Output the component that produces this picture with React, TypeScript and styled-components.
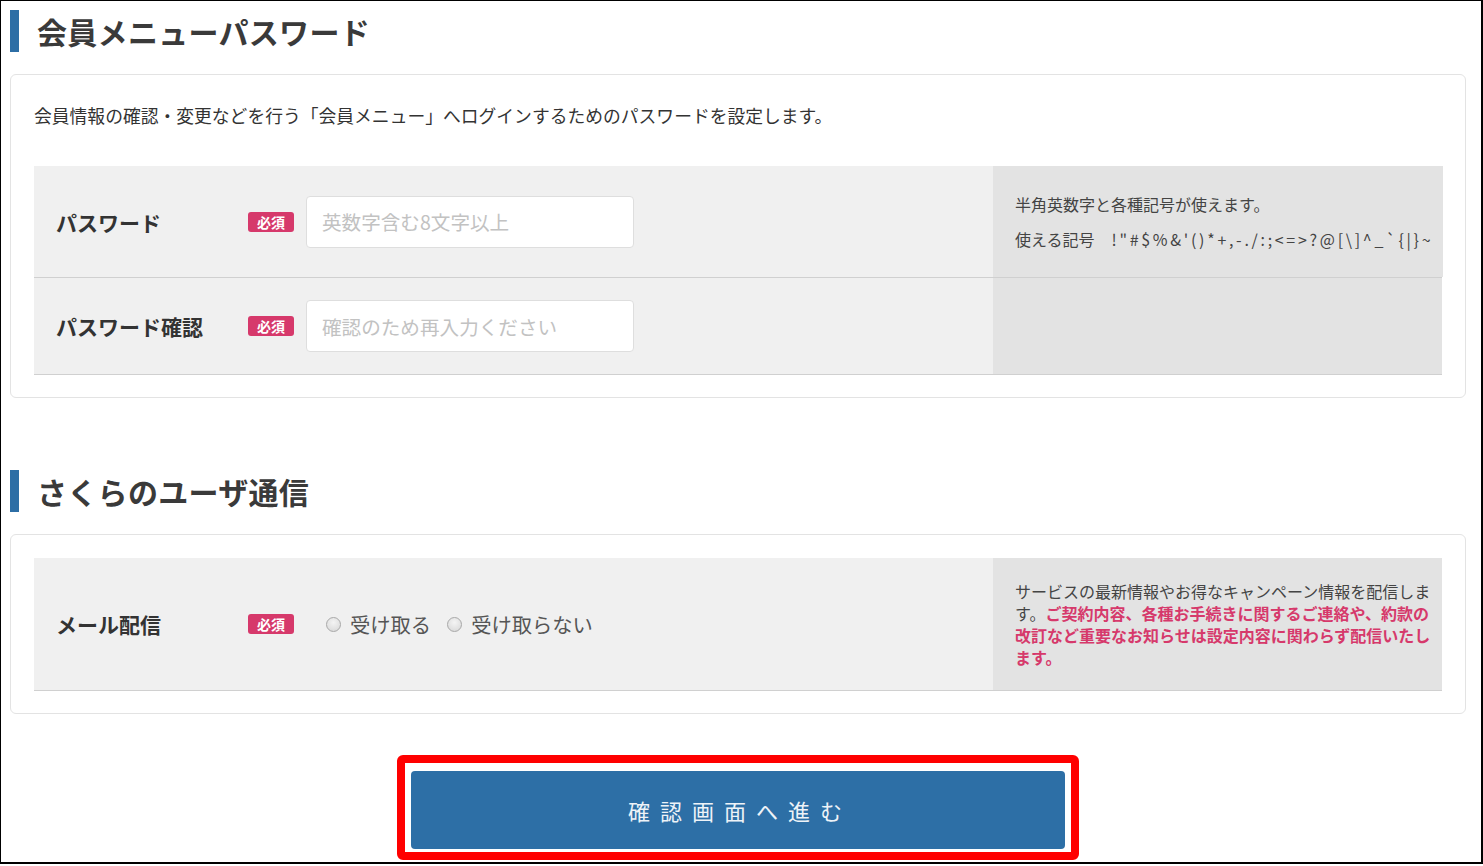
import React from "react";
import styled, { createGlobalStyle } from "styled-components";

const Global = createGlobalStyle`
  html, body { margin: 0; padding: 0; background: #fff; }
  body { font-family: "Noto Sans CJK JP", "Noto Sans", sans-serif; color: #333; }
  * { box-sizing: border-box; }
`;

const Frame = styled.div`
  width: 1483px;
  height: 864px;
  border-left: 1px solid #000;
  border-top: 1px solid #000;
  border-right: 2px solid #000;
  border-bottom: 2px solid #000;
  padding: 9px 15px 0 9px;
  display: flex;
  flex-direction: column;
  overflow: hidden;
`;

const Heading = styled.h2<{ $top?: number }>`
  margin: ${(p) => p.$top ?? 0}px 0 0 0;
  height: 42px;
  display: flex;
  align-items: center;
  gap: 18px;
  font-size: 30px;
  font-weight: 700;
  color: #3a3a3a;
  line-height: 1;
  letter-spacing: 0.3px;
  &::before {
    content: "";
    width: 9px;
    height: 42px;
    background: #2d6ea5;
  }
`;

const Card = styled.section<{ $padTop: number }>`
  margin-top: 22px;
  border: 1px solid #e3e3e3;
  border-radius: 6px;
  padding: ${(p) => p.$padTop}px 23px 22px 23px;
`;

const Intro = styled.p`
  margin: 0 0 39px 0;
  font-size: 17.8px;
  line-height: 24px;
  color: #333;
`;

const Row = styled.div`
  display: grid;
  grid-template-columns: 959px 1fr;
  border-bottom: 1px solid #d0d0d0;
`;

const LeftCell = styled.div`
  background: #f0f0f0;
  display: flex;
  align-items: center;
  padding: 22px 0;
`;

const Label = styled.div`
  width: 214px;
  padding-left: 22px;
  font-size: 21px;
  font-weight: 700;
  color: #333;
`;

const Badge = styled.span`
  width: 46px;
  height: 20px;
  border-radius: 3px;
  background: #d6396b;
  color: #fff;
  font-size: 14px;
  font-weight: 700;
  display: inline-flex;
  align-items: center;
  justify-content: center;
  margin-right: 12px;
  flex-shrink: 0;
`;

const TextInput = styled.input`
  width: 328px;
  height: 52px;
  border: 1px solid #dedede;
  border-radius: 4px;
  background: #fff;
  padding: 0 15px;
  font-family: inherit;
  font-size: 19.6px;
  color: #333;
  outline: none;
  &::placeholder { color: #c2c2c2; }
`;

const NoteCell = styled.div<{ $pad: string; $lh: number; $gap: number }>`
  background: #e3e3e3;
  padding: ${(p) => p.$pad};
  font-size: 16px;
  line-height: ${(p) => p.$lh}px;
  color: #444;
  display: flex;
  flex-direction: column;
  gap: ${(p) => p.$gap}px;
`;

const NoteLine = styled.p`
  margin: 0;
  white-space: nowrap;
`;

const Symbols = styled.span`
  margin-left: 17px;
  letter-spacing: 2.7px;
`;

const NoteBlock = styled.p`
  margin: 0;
  width: 418px;
`;

const Alert = styled.span`
  color: #d6396b;
  font-weight: 700;
`;

const RadioGroup = styled.div`
  display: flex;
  align-items: center;
  margin-left: 20px;
  gap: 16px;
`;

const RadioLabel = styled.label`
  display: flex;
  align-items: center;
  gap: 9px;
  font-size: 20.3px;
  color: #555;
`;

const RadioDot = styled.span`
  width: 15px;
  height: 15px;
  border-radius: 50%;
  border: 1px solid #a8a8a8;
  background: radial-gradient(circle at 50% 35%, #f4f4f4 0%, #d6d6d6 100%);
`;

const ButtonWrap = styled.div`
  align-self: center;
  margin-top: 41px;
  width: 682px;
  border: 8px solid #ff0000;
  border-radius: 6px;
  padding: 8px 6px 3px 6px;
  background: #fff;
`;

const Submit = styled.button`
  width: 100%;
  height: 78px;
  border: none;
  border-radius: 4px;
  background: #2d6fa6;
  color: #eef3f8;
  font-family: inherit;
  font-size: 22px;
  letter-spacing: 10px;
  padding-left: 10px;
  cursor: pointer;
`;

export default function App() {
  return (
    <>
      <Global />
      <Frame>
        <Heading>会員メニューパスワード</Heading>
        <Card $padTop={28}>
          <Intro>会員情報の確認・変更などを行う「会員メニュー」へログインするためのパスワードを設定します。</Intro>
          <Row>
            <LeftCell>
              <Label>パスワード</Label>
              <Badge>必須</Badge>
              <TextInput type="password" placeholder="英数字含む8文字以上" />
            </LeftCell>
            <NoteCell $pad="26px 10px 26px 22px" $lh={24} $gap={11}>
              <NoteLine>半角英数字と各種記号が使えます。</NoteLine>
              <NoteLine>
                使える記号<Symbols>{"!\"#$%&'()*+,-./:;<=>?@[\\]^_`{|}~"}</Symbols>
              </NoteLine>
            </NoteCell>
          </Row>
          <Row>
            <LeftCell>
              <Label>パスワード確認</Label>
              <Badge>必須</Badge>
              <TextInput type="password" placeholder="確認のため再入力ください" />
            </LeftCell>
            <NoteCell $pad="0" $lh={22} $gap={0} />
          </Row>
        </Card>

        <Heading $top={72}>さくらのユーザ通信</Heading>
        <Card $padTop={23}>
          <Row>
            <LeftCell>
              <Label>メール配信</Label>
              <Badge>必須</Badge>
              <RadioGroup>
                <RadioLabel>
                  <RadioDot />
                  受け取る
                </RadioLabel>
                <RadioLabel>
                  <RadioDot />
                  受け取らない
                </RadioLabel>
              </RadioGroup>
            </LeftCell>
            <NoteCell $pad="22px 8px 22px 22px" $lh={22} $gap={0}>
              <NoteBlock>
                サービスの最新情報やお得なキャンペーン情報を配信します。
                <Alert>ご契約内容、各種お手続きに関するご連絡や、約款の改訂など重要なお知らせは設定内容に関わらず配信いたします。</Alert>
              </NoteBlock>
            </NoteCell>
          </Row>
        </Card>

        <ButtonWrap>
          <Submit type="button">確認画面へ進む</Submit>
        </ButtonWrap>
      </Frame>
    </>
  );
}
